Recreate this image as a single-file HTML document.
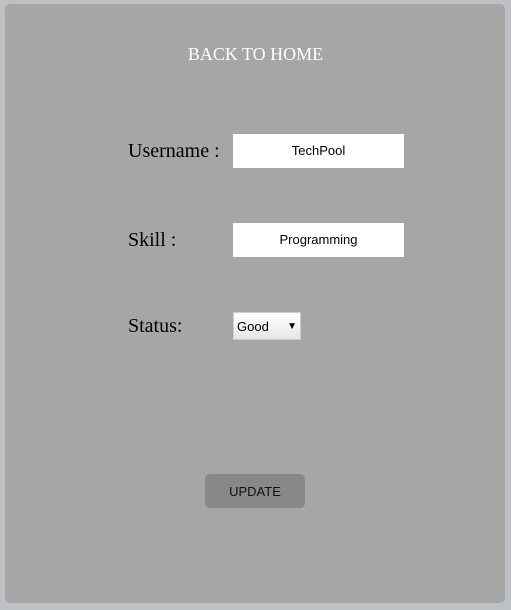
<!DOCTYPE html>
<html><head><style>
body{margin:0;width:511px;height:610px;background:#bdc1c5;position:relative;overflow:hidden}
.p{position:absolute;left:5px;top:4px;width:500px;height:599px;background:#a6a6a6;border-radius:5px}
.t{position:absolute;font-family:"Liberation Serif",serif;color:#000;font-size:20px}
.h{position:absolute;left:0;width:511px;top:44px;text-align:center;font-family:"Liberation Serif",serif;font-size:18px;color:#fff}
.in{position:absolute;left:233px;width:171px;height:34px;background:#fff;font-family:"Liberation Sans",sans-serif;font-size:13px;text-align:center;line-height:34px}
.sel{position:absolute;left:233px;top:312px;width:68px;height:28px;background:linear-gradient(#fff,#e6e6e6);border:1px solid #ccc;box-sizing:border-box;font-family:"Liberation Sans",sans-serif;font-size:13px;line-height:27px;padding-left:3px}
.sel span{position:absolute;right:3px;top:0;font-size:10px}
.b{position:absolute;left:205px;top:474px;width:100px;height:34px;background:#888;border-radius:5px;font-family:"Liberation Sans",sans-serif;font-size:13px;text-align:center;line-height:35px;color:#111}
</style></head><body>
<div class="p"></div>
<div class="h">BACK TO HOME</div>
<div class="t" style="left:128px;top:140px">Username :</div>
<div class="in" style="top:134px">TechPool</div>
<div class="t" style="left:128px;top:229px">Skill :</div>
<div class="in" style="top:223px">Programming</div>
<div class="t" style="left:128px;top:315px">Status:</div>
<div class="sel">Good<span>▼</span></div>
<div class="b">UPDATE</div>
</body></html>
